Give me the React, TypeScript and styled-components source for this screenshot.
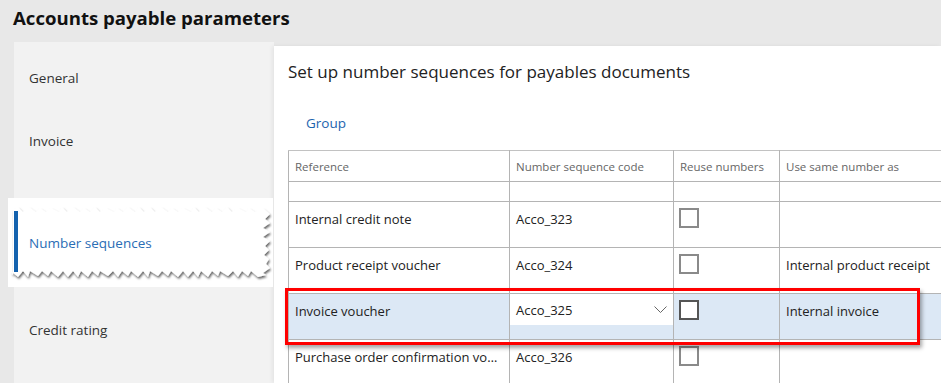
import React from "react";
import styled, { createGlobalStyle } from "styled-components";

const GlobalStyle = createGlobalStyle`
  body {
    margin: 0;
    background: #e8e8e8;
    font-family: "Open Sans", "Noto Sans", sans-serif;
    color: #222;
  }
`;

const Page = styled.div`
  position: relative;
  width: 941px;
  height: 383px;
  overflow: hidden;
  display: flex;
  flex-direction: column;
`;

const Title = styled.h1`
  margin: 0;
  height: 42px;
  padding-left: 13px;
  font-size: 18.6px;
  font-weight: 700;
  line-height: 36px;
  color: #111;
`;

const Body = styled.div`
  flex: 1;
  display: flex;
  min-height: 0;
`;

const Nav = styled.ul`
  margin: 0 0 0 14px;
  padding: 4px 0 0 15px;
  width: 245px;
  list-style: none;
  background: #f2f2f2;
`;

const NavItem = styled.li`
  height: 63px;
  display: flex;
  align-items: center;
  font-size: 13.5px;
  color: #333;
`;

const Content = styled.section`
  flex: 1;
  margin-top: 4px;
  padding: 14px 0 0 14px;
  background: #fff;
  box-shadow: -2px 0 4px rgba(0, 0, 0, 0.06);
  overflow: hidden;
`;

const Heading = styled.h2`
  margin: 0;
  font-size: 17px;
  font-weight: 400;
  line-height: 24px;
  color: #222;
`;

const Toolbar = styled.div`
  height: 66px;
  padding: 27px 0 0 18px;
  box-sizing: border-box;
`;

const ToolButton = styled.span`
  font-size: 13.5px;
  line-height: 20px;
  color: #1c64ae;
`;

const TableWrap = styled.div`
  position: relative;
  width: 700px;
`;

const Grid = styled.table`
  border-collapse: collapse;
  table-layout: fixed;
  width: 700px;
`;

const HeadCell = styled.th<{ $w: number }>`
  width: ${(p) => p.$w}px;
  height: 31px;
  padding: 0 6px;
  border: 1px solid #b4b4b4;
  border-top-color: #c2c2c2;
  text-align: left;
  font-size: 11.5px;
  font-weight: 400;
  color: #666;
  box-sizing: border-box;
`;

const Row = styled.tr<{ $selected?: boolean }>`
  background: ${(p) => (p.$selected ? "#dce8f5" : "#fff")};
`;

const Cell = styled.td<{ $h?: number }>`
  height: ${(p) => p.$h ?? 46}px;
  padding: 8px 6px 0;
  border: 1px solid #b4b4b4;
  vertical-align: top;
  font-size: 13px;
  line-height: 18px;
  color: #222;
  white-space: nowrap;
  overflow: hidden;
  text-overflow: ellipsis;
  box-sizing: border-box;
`;

const SelectCell = styled.td`
  height: 46px;
  padding: 0;
  border: 1px solid #b4b4b4;
  vertical-align: top;
  box-sizing: border-box;
`;

const Select = styled.div`
  height: 31px;
  display: flex;
  align-items: center;
  justify-content: space-between;
  padding: 0 6px 0 6px;
  background: #fff;
  font-size: 13px;
  color: #222;
`;

const Check = styled.div<{ $dark?: boolean }>`
  width: 20px;
  height: 20px;
  margin: -2px 0 0 -1px;
  border: 2px solid ${(p) => (p.$dark ? "#555" : "#8a8a8a")};
  background: #fff;
  box-sizing: border-box;
`;

const Highlight = styled.div`
  position: absolute;
  left: -3px;
  top: 138px;
  width: 635px;
  height: 57px;
  border: 3px solid #f00;
  box-sizing: border-box;
  box-shadow: 2px 3px 4px rgba(0, 0, 0, 0.35);
  pointer-events: none;
`;

const Callout = styled.div`
  position: absolute;
  left: 8px;
  top: 198px;
  width: 265px;
  height: 89px;
  background: #fff;
`;

const Torn = styled.svg`
  position: absolute;
  left: 0;
  top: 0;
`;

const CalloutBar = styled.div`
  position: absolute;
  left: 6px;
  top: 13px;
  width: 4px;
  height: 61px;
  background: #1462ae;
`;

const CalloutLabel = styled.span`
  position: absolute;
  left: 21px;
  top: 35px;
  font-size: 13.5px;
  line-height: 20px;
  color: #2a6db5;
`;

// zigzag outline for the torn-paper snip
const jitter = [0, 2, 1, 3, 0, 2, 1, 0, 3, 1, 2, 0];

function tornPath() {
  const pts: string[] = [];
  pts.push("5,12");
  let i = 0;
  for (let x = 10; x < 250; x += 11) {
    const j = jitter[i++ % jitter.length];
    pts.push(`${x},${9 + (j % 2)}`, `${x + 5 + j},${14}`);
  }
  pts.push("255,10");
  for (let y = 16; y < 72; y += 9) {
    const j = jitter[i++ % jitter.length];
    pts.push(`${262 - (j % 2)},${y}`, `${255 + j},${y + 5}`);
  }
  pts.push("258,77");
  for (let x = 250; x > 8; x -= 10) {
    const j = jitter[i++ % jitter.length];
    pts.push(`${x},${79 - (j % 2)}`, `${x - 5 - j},${73}`);
  }
  pts.push("5,77");
  return pts.join(" ");
}

const rows = [
  { ref: "Internal credit note", code: "Acco_323", same: "" },
  { ref: "Product receipt voucher", code: "Acco_324", same: "Internal product receipt" },
  { ref: "Invoice voucher", code: "Acco_325", same: "Internal invoice", selected: true },
  { ref: "Purchase order confirmation voucher", code: "Acco_326", same: "" },
];

export default function App() {
  return (
    <Page>
      <GlobalStyle />
      <Title>Accounts payable parameters</Title>
      <Body>
        <Nav>
          <NavItem>General</NavItem>
          <NavItem>Invoice</NavItem>
          <NavItem />
          <NavItem />
          <NavItem>Credit rating</NavItem>
        </Nav>
        <Content>
          <Heading>Set up number sequences for payables documents</Heading>
          <Toolbar>
            <ToolButton>Group</ToolButton>
          </Toolbar>
          <TableWrap>
            <Grid>
              <thead>
                <tr>
                  <HeadCell $w={221}>Reference</HeadCell>
                  <HeadCell $w={164}>Number sequence code</HeadCell>
                  <HeadCell $w={106}>Reuse numbers</HeadCell>
                  <HeadCell $w={209}>Use same number as</HeadCell>
                </tr>
              </thead>
              <tbody>
                <Row>
                  <Cell $h={20} />
                  <Cell $h={20} />
                  <Cell $h={20} />
                  <Cell $h={20} />
                </Row>
                {rows.map((r) => (
                  <Row key={r.code} $selected={r.selected}>
                    <Cell>{r.ref}</Cell>
                    {r.selected ? (
                      <SelectCell>
                        <Select>
                          {r.code}
                          <svg width="13" height="8" viewBox="0 0 13 8">
                            <polyline points="0.5,0.5 6.5,6.5 12.5,0.5" fill="none" stroke="#666" strokeWidth="1" />
                          </svg>
                        </Select>
                      </SelectCell>
                    ) : (
                      <Cell>{r.code}</Cell>
                    )}
                    <Cell>
                      <Check $dark={r.selected} />
                    </Cell>
                    <Cell>{r.same}</Cell>
                  </Row>
                ))}
              </tbody>
            </Grid>
            <Highlight />
          </TableWrap>
        </Content>
      </Body>
      <Callout>
        <Torn width="265" height="89">
          <defs>
            <filter id="tornShadow" x="-5%" y="-20%" width="115%" height="150%">
              <feDropShadow dx="1" dy="2" stdDeviation="0.8" floodColor="#000" floodOpacity="0.6" />
            </filter>
          </defs>
          <polygon points={tornPath()} fill="#fff" filter="url(#tornShadow)" />
        </Torn>
        <CalloutBar />
        <CalloutLabel>Number sequences</CalloutLabel>
      </Callout>
    </Page>
  );
}
